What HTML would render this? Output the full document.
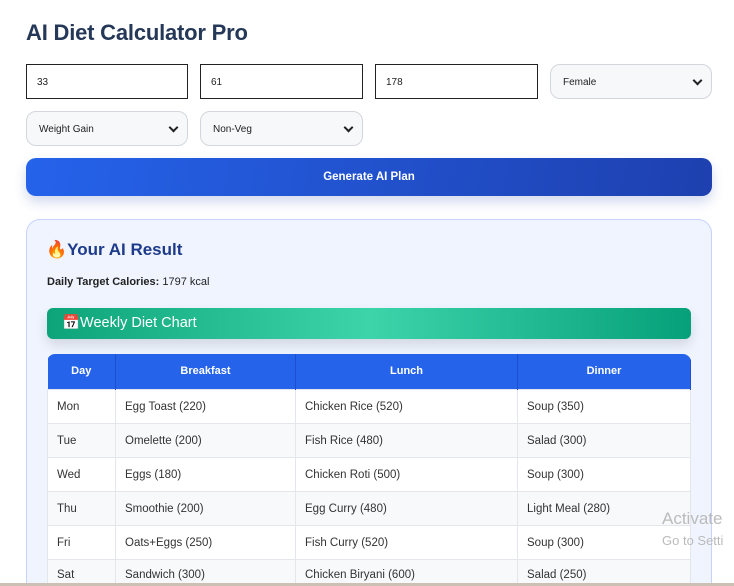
<!DOCTYPE html>
<html><head><meta charset="utf-8"><style>
*{box-sizing:border-box;margin:0;padding:0}
html,body{width:734px;height:586px;overflow:hidden}
body{background:#fff;font-family:"Liberation Sans",sans-serif}
.wrap{position:relative;width:734px;height:586px;overflow:hidden}
h1{position:absolute;left:26px;top:20px;font-size:22px;font-weight:bold;color:#253858;letter-spacing:-0.2px}
.in{position:absolute;height:35px;font-size:10px;color:#222;padding:12px 10px;}
.box{border:1.5px solid #222;background:#fff}
.sel{border:1px solid #d3d6dc;background:#f7f8fa;border-radius:10px;padding-left:12px}
.sel:after{content:"";position:absolute;right:10px;top:12px;width:5px;height:5px;border-right:2px solid #222;border-bottom:2px solid #222;transform:rotate(45deg)}
.btn{position:absolute;left:26px;top:158px;width:686px;height:38px;border-radius:10px;background:linear-gradient(100deg,#2563eb,#1e40af);color:#fff;font-weight:bold;font-size:11.5px;text-align:center;line-height:38px;box-shadow:0 6px 12px rgba(30,64,175,.2)}
.res{position:absolute;left:26px;top:219px;width:686px;height:367px;background:#eff4ff;border:1px solid #c7d2fe;border-bottom:none;border-radius:14px 14px 0 0}
.rt{position:absolute;left:46px;top:240px;font-size:17px;font-weight:bold;color:#1e3a8a}
.cal{position:absolute;left:47px;top:276px;font-size:11px;color:#222}
.green{position:absolute;left:47px;top:308px;width:644px;height:31px;border-radius:6px;background:linear-gradient(90deg,#0ea47a,#3dd4aa 50%,#06a07a);color:#fff;font-size:14.5px;line-height:31px;padding-left:15px;box-shadow:0 6px 12px rgba(0,0,0,.12)}
table{position:absolute;left:47px;top:354px;width:644px;border-collapse:collapse;font-size:11.5px;color:#333;border-radius:8px 8px 0 0;overflow:hidden}
th{background:#2563eb;color:#fff;height:35px;font-size:11px;border-right:1px solid #1d4fd0}
td{height:34px;padding-left:9px;padding-top:2px;border:1px solid #e3e6ea;background:#fff}
tr.last td{height:27px;border-bottom:none;padding-top:5px}
tr:nth-child(odd) td{background:#f8f9fb}
.w1{position:absolute;left:662px;top:509px;font-size:17px;color:#bbb}
.w2{position:absolute;left:662px;top:533px;font-size:13px;color:#bbb}
.bar{position:absolute;left:0;top:583px;width:734px;height:3px;background:#ccbfb3}
</style></head><body><div class="wrap">
<h1>AI Diet Calculator Pro</h1>
<div class="in box" style="left:26px;top:64px;width:162px">33</div>
<div class="in box" style="left:200px;top:64px;width:163px">61</div>
<div class="in box" style="left:375px;top:64px;width:163px">178</div>
<div class="in sel" style="left:550px;top:64px;width:162px">Female</div>
<div class="in sel" style="left:26px;top:111px;width:162px">Weight Gain</div>
<div class="in sel" style="left:200px;top:111px;width:163px">Non-Veg</div>
<div class="btn">Generate AI Plan</div>
<div class="res"></div>
<div class="rt">🔥Your AI Result</div>
<div class="cal"><b>Daily Target Calories:</b> 1797 kcal</div>
<div class="green">📅Weekly Diet Chart</div>
<table>
<tr><th style="width:68px">Day</th><th style="width:180px">Breakfast</th><th style="width:222px">Lunch</th><th>Dinner</th></tr>
<tr><td>Mon</td><td>Egg Toast (220)</td><td>Chicken Rice (520)</td><td>Soup (350)</td></tr>
<tr><td>Tue</td><td>Omelette (200)</td><td>Fish Rice (480)</td><td>Salad (300)</td></tr>
<tr><td>Wed</td><td>Eggs (180)</td><td>Chicken Roti (500)</td><td>Soup (300)</td></tr>
<tr><td>Thu</td><td>Smoothie (200)</td><td>Egg Curry (480)</td><td>Light Meal (280)</td></tr>
<tr><td>Fri</td><td>Oats+Eggs (250)</td><td>Fish Curry (520)</td><td>Soup (300)</td></tr>
<tr class="last"><td>Sat</td><td>Sandwich (300)</td><td>Chicken Biryani (600)</td><td>Salad (250)</td></tr>
</table>
<div class="w1">Activate</div>
<div class="w2">Go to Setti</div>
<div class="bar"></div>
</div></body></html>
